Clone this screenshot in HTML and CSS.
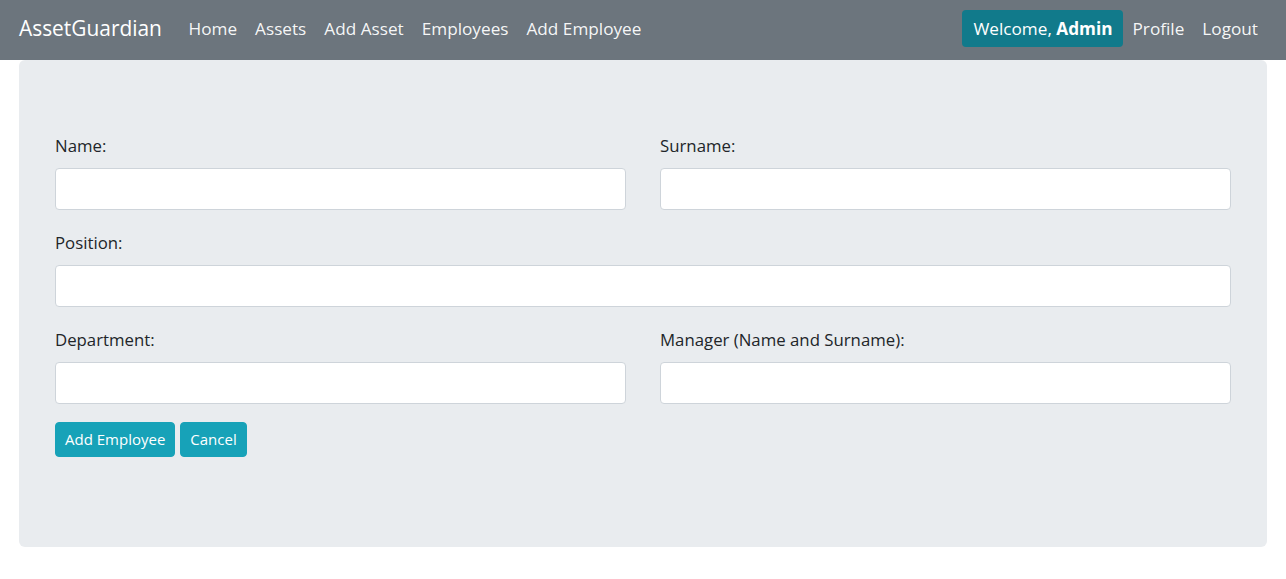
FILE: index.html
```html
<!DOCTYPE html>
<html lang="en">
<head>
<meta charset="utf-8">
<title>Add Employee - AssetGuardian</title>
<link rel="stylesheet" href="styles.css">
</head>
<body>
<nav class="navbar">
  <a class="brand" href="#">AssetGuardian</a>
  <ul class="nav">
    <li><a class="nav-link" href="#">Home</a></li>
    <li><a class="nav-link" href="#">Assets</a></li>
    <li><a class="nav-link" href="#">Add Asset</a></li>
    <li><a class="nav-link" href="#">Employees</a></li>
    <li><a class="nav-link" href="#">Add Employee</a></li>
  </ul>
  <ul class="nav nav-right">
    <li><span class="welcome">Welcome, <b>Admin</b></span></li>
    <li><a class="nav-link" href="#">Profile</a></li>
    <li><a class="nav-link" href="#">Logout</a></li>
  </ul>
</nav>
<main class="panel">
  <form class="form">
    <div class="row">
      <div class="group">
        <label for="name">Name:</label>
        <input id="name" class="control" type="text">
      </div>
      <div class="group">
        <label for="surname">Surname:</label>
        <input id="surname" class="control" type="text">
      </div>
    </div>
    <div class="group">
      <label for="position">Position:</label>
      <input id="position" class="control" type="text">
    </div>
    <div class="row">
      <div class="group">
        <label for="department">Department:</label>
        <input id="department" class="control" type="text">
      </div>
      <div class="group">
        <label for="manager">Manager (Name and Surname):</label>
        <input id="manager" class="control" type="text">
      </div>
    </div>
    <div class="actions">
      <button type="submit" class="btn">Add Employee</button>
      <button type="button" class="btn">Cancel</button>
    </div>
  </form>
</main>
</body>
</html>
```
FILE: styles.css
```css
* { box-sizing: border-box; }
html, body { margin: 0; padding: 0; }
body {
  font-family: "Open Sans", "Noto Sans", "Liberation Sans", sans-serif;
  color: #212529;
  background: #fff;
  font-size: 16.8px;
}
.navbar {
  display: flex;
  align-items: center;
  height: 60px;
  padding: 0 19px 4px;
  background: #6c757d;
}
.brand {
  color: #fff;
  text-decoration: none;
  font-size: 20.9px;
  margin-right: 17.6px;
}
.nav {
  display: flex;
  align-items: center;
  list-style: none;
  margin: 0;
  padding: 0;
}
.nav-right { margin-left: auto; }
.nav-link {
  display: block;
  color: rgba(255,255,255,0.95);
  text-decoration: none;
  font-size: 17.2px;
  padding: 8px 9px;
}
.welcome {
  display: block;
  background: #117a8b;
  color: #fff;
  border-radius: 4px;
  height: 37px;
  line-height: 37px;
  padding: 0 10px 0 11px;
  margin-right: 1px;
  font-size: 17.2px;
}
.welcome b { font-weight: 700; }
.panel {
  margin: 0 19px;
  background: #e9ecef;
  border-radius: 6px;
  padding: 73px 36px 90px;
}
.row {
  display: grid;
  grid-template-columns: 1fr 1fr;
  column-gap: 34px;
}
.group {
  display: flex;
  flex-direction: column;
  margin-bottom: 20px;
}
label {
  display: block;
  line-height: 26px;
  margin-bottom: 9px;
}
.control {
  display: block;
  width: 100%;
  height: 42px;
  border: 1px solid #ced4da;
  border-radius: 4px;
  background: #fff;
  font: inherit;
  padding: 6px 13px;
}
.actions {
  display: flex;
  gap: 5px;
  margin-top: -2px;
}
.btn {
  font-family: inherit;
  font-size: 15px;
  height: 35px;
  line-height: 23px;
  padding: 5px 9px;
  color: #fff;
  background: #17a2b8;
  border: 1px solid #17a2b8;
  border-radius: 4px;
}
```
